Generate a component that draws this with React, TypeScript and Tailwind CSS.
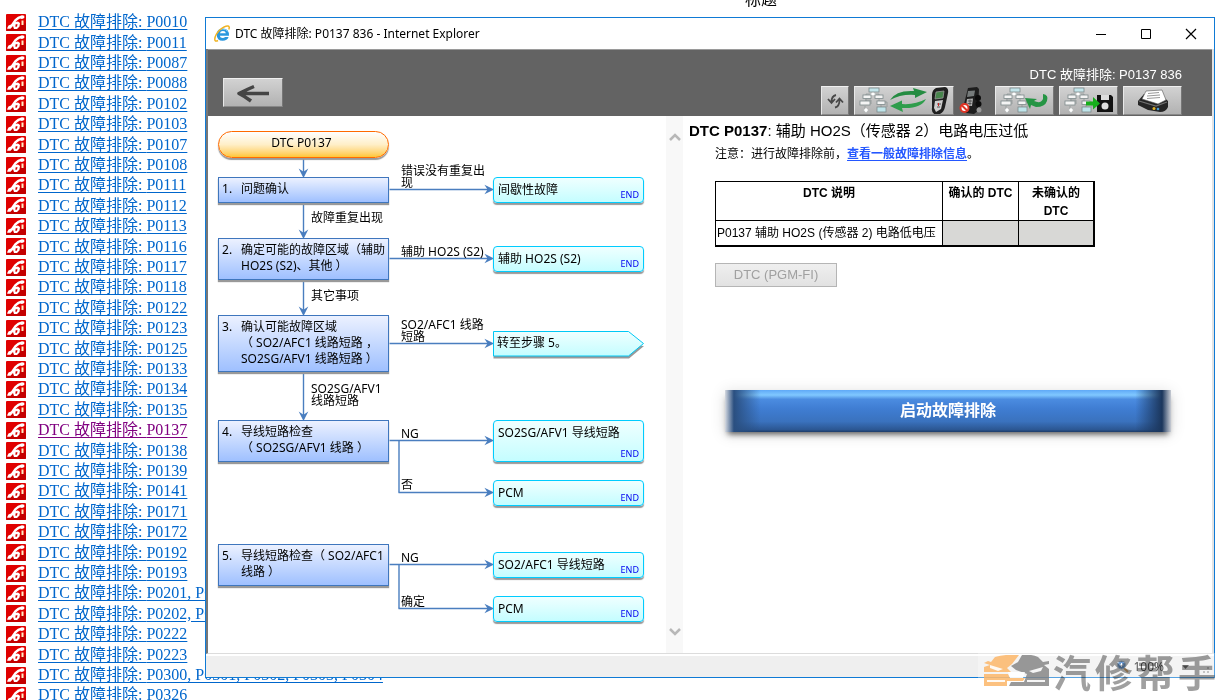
import React from 'react';

interface FlowNode {
  text: string[];
  box: string;
}

interface StepNode extends FlowNode {
  num: number;
}

const codes = [
  'P0010', 'P0011', 'P0087', 'P0088', 'P0102', 'P0103', 'P0107', 'P0108', 'P0111',
  'P0112', 'P0113', 'P0116', 'P0117', 'P0118', 'P0122', 'P0123', 'P0125', 'P0133',
  'P0134', 'P0135', 'P0137', 'P0138', 'P0139', 'P0141', 'P0171', 'P0172', 'P0192',
  'P0193', 'P0201, P0202', 'P0202, P0203', 'P0222', 'P0223',
  'P0300, P0301, P0302, P0303, P0304', 'P0326',
];

const visited = 'P0137';

const steps: StepNode[] = [
  { num: 1, text: ['问题确认'], box: 'top-[61px] h-[26px]' },
  { num: 2, text: ['确定可能的故障区域（辅助', 'HO2S (S2)、其他 ）'], box: 'top-[122px] h-[42px]' },
  { num: 3, text: ['确认可能故障区域', '（ SO2/AFC1 线路短路 ，', 'SO2SG/AFV1 线路短路 ）'], box: 'top-[199px] h-[57px]' },
  { num: 4, text: ['导线短路检查', '（ SO2SG/AFV1 线路 ）'], box: 'top-[304px] h-[42px]' },
  { num: 5, text: ['导线短路检查（ SO2/AFC1', '线路 ）'], box: 'top-[428px] h-[42px]' },
];

const ends: FlowNode[] = [
  { text: ['间歇性故障'], box: 'top-[61px] h-[26px]' },
  { text: ['辅助 HO2S (S2)'], box: 'top-[130px] h-[26px]' },
  { text: ['SO2SG/AFV1 导线短路'], box: 'top-[304px] h-[42px]' },
  { text: ['PCM'], box: 'top-[364px] h-[26px]' },
  { text: ['SO2/AFC1 导线短路'], box: 'top-[436px] h-[26px]' },
  { text: ['PCM'], box: 'top-[480px] h-[26px]' },
];

const labels: FlowNode[] = [
  { text: ['错误没有重复出', '现'], box: 'left-[193px] top-[49px]' },
  { text: ['故障重复出现'], box: 'left-[103px] top-[96px]' },
  { text: ['辅助 HO2S (S2)'], box: 'left-[193px] top-[130px]' },
  { text: ['其它事项'], box: 'left-[103px] top-[174px]' },
  { text: ['SO2/AFC1 线路', '短路'], box: 'left-[193px] top-[203px]' },
  { text: ['SO2SG/AFV1', '线路短路'], box: 'left-[103px] top-[267px]' },
  { text: ['NG'], box: 'left-[193px] top-[312px]' },
  { text: ['否'], box: 'left-[193px] top-[363px]' },
  { text: ['NG'], box: 'left-[193px] top-[436px]' },
  { text: ['确定'], box: 'left-[193px] top-[480px]' },
];

// [x, from, to]
const downLines = [[95, 42, 60], [95, 87, 121], [95, 164, 198], [95, 256, 303]];
// [y, from]
const rightLines = [[73, 181], [142, 181], [227, 181], [324, 181], [376, 190], [448, 181], [492, 190]];

const PhoneIcon = () => (
  <svg width="20" height="17" viewBox="0 0 20 17" className="shrink-0" aria-hidden="true">
    <rect width="20" height="17" rx="1" fill="#e00000" />
    <path d="M0 16 20 9v7q0 1-1 1H1Q0 17 0 16Z" fill="#c40000" />
    <path d="M1 14.500 2.500 11.500 5 10.500 8.500 5.500Q11.500 2 16 1.300L18.300 1.800V4L16 5 14 4.500Q11.500 5.500 9.500 8L12 7.500 14 9 13.500 12.500 11 15H8L7 12 4.500 14.800H2Z" fill="#fff" />
    <path d="M9.500 10.500 11.500 10 11 12.500 9.500 13Z" fill="#d90000" />
    <path d="M16.500 6.500V11" stroke="#ffedc4" strokeWidth="2" />
  </svg>
);

const IeIcon = () => (
  <svg width="16" height="17" viewBox="0 0 16 17" aria-hidden="true">
    <path d="M15 10.700H5.800Q6.200 13 8.700 13 10.300 13 11 12H14.600Q13.200 15.800 8.700 15.800 2.800 15.800 2.700 9.700 2.800 3.600 8.800 3.500 15.200 3.600 15 10.700ZM11.900 8.300Q11.500 6.100 8.900 6.100 6.400 6.100 5.900 8.300Z" fill="#2b97de" />
    <path d="M4.500 6Q6 4 8.800 4 12 4 13.500 6.200" fill="none" stroke="#8ad6f8" strokeWidth="1" />
    <path d="M4 15.500Q.6 17.200.8 14 1.200 9.500 6 4.800 11 .5 14 1 16 1.500 14.800 4.500" fill="none" stroke="#f0b323" strokeWidth="1.500" />
  </svg>
);

const MiniFlow = () => (
  <g>
    <path d="M18 5v3M11 8V7h13v1M11 11v4M24 11v3M10 19v3M26 17v3M10 13h6v4M29 15h3v5" fill="none" stroke="#8f9797" strokeWidth=".8" />
    <g stroke="#7d898b" strokeWidth=".8">
      <rect x="14" y="1" width="10" height="4" fill="#c2e4ea" />
      <rect x="8" y="8" width="8" height="3.500" fill="#f4f4f4" />
      <rect x="20" y="8" width="8" height="3.500" fill="#f4f4f4" />
      <rect x="5" y="14" width="10" height="4" fill="#f4f4f4" />
      <rect x="22" y="14" width="8" height="3.500" fill="#f4f4f4" />
      <rect x="22" y="20" width="9" height="5" fill="#bfe4ea" />
    </g>
    <path d="m18 5 3 2-3 2-3-2ZM11 20.500l2.500 2.500L11 26l-2.500-3Z" fill="#fff" stroke="#a5adad" strokeWidth=".5" />
  </g>
);

const ScanTool = () => (
  <g>
    <path d="M8 1 17 0Q21 1 20 6L17 20Q16 25 12 27L8 28Q3 26 4 21L4 8Q4 3 8 1Z" fill="#202020" />
    <path d="M8 5 16 4 15 11 7 12Z" fill="#47854c" stroke="#9a9a9a" strokeWidth=".8" />
    <path d="M7 14 15 13 13 22 8 25 6 21Z" fill="#cfcfcf" />
    <path d="M9 17h4M9 20h3" stroke="#555" strokeWidth="1" />
    <path d="M10.500 16v3" stroke="#c22" strokeWidth="1" />
  </g>
);

interface ToolButtonProps {
  label: string;
  width: string;
  viewBox: string;
  children: React.ReactNode;
}

const ToolButton: React.FC<ToolButtonProps> = ({ label, width, viewBox, children }) => (
  <button
    type="button"
    aria-label={label}
    className={`${width} h-[29px] shrink-0 border border-t-[#f0f0f0] border-l-[#e8e8e8] border-r-[#777] border-b-[#888] bg-linear-to-b from-[#d2d2d2] to-[#b2b2b2]`}
  >
    <svg viewBox={viewBox} className="block h-full w-full" aria-hidden="true">{children}</svg>
  </button>
);

const Toolbar = () => (
  <div className="flex h-[67px] shrink-0 items-end justify-between border-t border-[#9a9a9a] bg-[#636363] pl-[15px] pr-[30px]">
    <div className="pb-1">
      <ToolButton label="返回" width="w-[60px]" viewBox="0 0 58 27">
        <path d="M45 14.500H16M30 7.500Q25 9.500 15 14.500 21 17.500 27 22" fill="none" stroke="#454545" strokeWidth="3.500" strokeLinejoin="round" />
      </ToolButton>
    </div>
    <div className="flex flex-col items-end gap-[3px]">
      <span className="font-['Liberation_Sans','Noto_Sans_CJK_SC',sans-serif] text-[13px] leading-4 text-white">DTC 故障排除: P0137 836</span>
      <div className="flex gap-[5px] pb-px">
        <ToolButton label="刷新" width="w-7" viewBox="0 0 26 27">
          <path d="M14 8Q9.500 9 9.500 15M6 12 9.500 16 13 12M13 20.500Q17.500 19.500 17.500 13M14 15.500 17.500 11.500 21 15.500" fill="none" stroke="#484848" strokeWidth="1.800" />
        </ToolButton>
        <ToolButton label="同步" width="w-[100px]" viewBox="0 0 98 27">
          <MiniFlow />
          <path d="M35 13Q41 3 59 4L58 1 72 5 60 11 60 8Q46 7 35 13Z" fill="#258c42" />
          <path d="M71 12Q66 22 47 21L48 25 35 19 47 13.500 47 17Q60 18 71 12Z" fill="#2f9d4c" />
          <g transform="translate(73 0)"><ScanTool /></g>
        </ToolButton>
        <svg width="27" height="29" viewBox="0 0 27 29" className="mr-1" role="img" aria-label="未连接">
          <path d="M9 2 18 1 20 3 19 25 15 28 7 27 4 22Z" fill="#1d1d1d" />
          <path d="M9 5 16 4.500 15 10 8 11Z" fill="#767b7b" />
          <path d="M8 13 14 12.500 13 20 7 20Z" fill="#b0b0b0" />
          <path d="M9 15h4M8.500 17.500h4M11 13.500v6" stroke="#444" strokeWidth=".8" />
          <g fill="#0c0c0c"><circle cx="19" cy="12" r="3" /><circle cx="19.500" cy="18" r="3" /></g>
          <circle cx="20" cy="24" r="2.500" fill="#999" />
          <circle cx="5.500" cy="22" r="4" fill="#fff" stroke="#de3425" strokeWidth="2" />
          <path d="m2.500 19 6 6" stroke="#de3425" strokeWidth="2" />
        </svg>
        <ToolButton label="流程返回" width="w-[59px]" viewBox="0 0 57 27">
          <MiniFlow />
          <path d="M47 7Q53 8 51 14 49 20 40 20L35 18 34 22 29 11 41 12 38 14Q45 17 47 12Z" fill="#259544" />
        </ToolButton>
        <ToolButton label="保存" width="w-[59px]" viewBox="0 0 57 27">
          <MiniFlow />
          <path d="M37 8h14l2 2v15H37Z" fill="#111" />
          <path d="M41 8h8v5h-8Z" fill="#ddd" />
          <circle cx="45" cy="19" r="3.500" fill="#ddd" />
          <path d="M26 14.500h7V10l7 6.500-7 6v-4h-7Z" fill="#16ae1b" />
        </ToolButton>
        <ToolButton label="打印" width="w-[59px]" viewBox="0 0 57 27">
          <path d="M14 14 20 7 38 9 44 14V20Q42 25 36 25L24 23 14 18Z" fill="#252525" />
          <path d="M22 4 38 3 42 13 34 17 18 12Z" fill="#fff" stroke="#555" strokeWidth=".6" />
          <path d="M24 6.500 35 5.500M23 9 36 8M23 11.500 36 10.500" stroke="#999" strokeWidth="1" />
          <path d="M15 14 32 19 43 15" fill="none" stroke="#717171" strokeWidth="1.200" />
          <circle cx="30" cy="21.500" r="1.500" fill="#e0b42b" />
          <circle cx="34" cy="22" r="1.300" fill="#4b9cd1" />
        </ToolButton>
      </div>
    </div>
  </div>
);

const FlowChart = () => (
  <div className="relative w-[458px] shrink-0 overflow-hidden text-xs">
    <svg className="absolute left-0 top-0 h-full w-full" aria-hidden="true">
      <g stroke="#4a7ebf" strokeWidth="1.400" fill="none" transform="translate(.5 .5)">
        {downLines.map(([x, from, to]) => (
          <g key={from}>
            <path d={`M${x} ${from}V${to - 3}`} />
            <path d={`M${x - 3} ${to - 6} ${x} ${to - 4} ${x + 3} ${to - 6} ${x} ${to}Z`} fill="#4a7ebf" />
          </g>
        ))}
        {rightLines.map(([y, from]) => (
          <g key={y}>
            <path d={`M${from} ${y}H281`} />
            <path d={`M278 ${y - 3} 280 ${y} 278 ${y + 3} 284 ${y}Z`} fill="#4a7ebf" />
          </g>
        ))}
        <path d="M190.500 324V376M190.500 448V492" />
      </g>
    </svg>

    <div className="absolute left-[10px] top-[15px] h-[27px] w-[171px] rounded-full border border-[#ff6a00] bg-linear-to-b from-white via-[#ffefc8] to-[#ffc62e] pr-1 text-center leading-[22px] shadow-[0_2px_1px_#999]">
      DTC P0137
    </div>

    {steps.map(step => (
      <div
        key={step.num}
        className={`absolute left-[10px] flex w-[171px] border border-[#3f76bd] bg-linear-to-b from-[#ecf1ff] to-[#9fc0ff] pl-[3px] pt-[3px] leading-4 shadow-[0_2px_1px_#999] ${step.box}`}
      >
        <span className="w-[19px] shrink-0">{step.num}.</span>
        <span className="whitespace-nowrap">
          {step.text.map(line => <span key={line} className="block">{line}</span>)}
        </span>
      </div>
    ))}

    {ends.map(node => (
      <div
        key={node.box}
        className={`absolute left-[285px] w-[151px] rounded-[4px] border border-[#00ccff] bg-linear-to-b from-[#efffff] to-[#c4fdff] pl-1 pt-1 leading-4 shadow-[0_2px_1px_#999] ${node.box}`}
      >
        {node.text[0]}
        <span className="absolute bottom-0 right-1 text-[9px] leading-[15px] text-[#0000f0]">END</span>
      </div>
    ))}

    <div className="absolute left-[285px] top-[215px] h-[29px] w-[152px]">
      <svg width="152" height="29" viewBox="0 0 152 29" className="absolute" aria-hidden="true">
        <defs>
          <linearGradient id="goto" x1="0" y1="0" x2="0" y2="1">
            <stop offset="0" stopColor="#efffff" />
            <stop offset="1" stopColor="#c4fdff" />
          </linearGradient>
        </defs>
        <path d="M.5 2.500V27.500H136L151 15Z" fill="#999" />
        <path d="M.5.5H135.500L150.500 12.500 135.500 25H.5Z" fill="url(#goto)" stroke="#00c8f5" />
      </svg>
      <span className="relative block pl-1 pt-1 leading-4">转至步骤 5。</span>
    </div>

    {labels.map(label => (
      <div key={label.box} className={`absolute whitespace-nowrap leading-3 ${label.box}`}>
        {label.text.map(line => <span key={line} className="block">{line}</span>)}
      </div>
    ))}
  </div>
);

const ScrollBar = () => (
  <div className="flex w-[17px] shrink-0 flex-col items-center justify-between bg-[#f8f8f8] pb-[17px] pt-[17px]">
    <svg width="12" height="8" viewBox="0 0 12 8" aria-hidden="true">
      <path d="M1 7 6 2l5 5" fill="none" stroke="#b8b8b8" strokeWidth="2.500" />
    </svg>
    <svg width="12" height="8" viewBox="0 0 12 8" aria-hidden="true">
      <path d="M1 1 6 6l5-5" fill="none" stroke="#b8b8b8" strokeWidth="2.500" />
    </svg>
  </div>
);

const Details = () => (
  <section className="min-w-0 grow pl-[6px] pt-[5px] font-['Liberation_Sans','Noto_Sans_CJK_SC',sans-serif] text-xs">
    <h1 className="text-[15px] leading-5"><b>DTC P0137</b>: 辅助 HO2S（传感器 2）电路电压过低</h1>
    <div className="pl-[26px]">
      <p className="pt-1 leading-[18px]">
        注意：进行故障排除前，<a href="#general" className="font-bold text-[#2457ff] underline underline-offset-2">查看一般故障排除信息</a>。
      </p>
      <table className="mt-[18px] w-[380px] table-fixed border-collapse border border-b-2 border-r-2 border-black leading-[18px]">
        <thead>
          <tr className="h-[39px] align-top">
            <th className="w-[227px] border border-black pt-[2px]">DTC 说明</th>
            <th className="w-[76px] border border-black pt-[2px]">确认的 DTC</th>
            <th className="border border-black px-3 pt-[2px]">未确认的 DTC</th>
          </tr>
        </thead>
        <tbody>
          <tr className="h-[25px]">
            <td className="whitespace-nowrap border border-black pl-px">P0137 辅助 HO2S (传感器 2) 电路低电压</td>
            <td className="border border-black bg-[#d8d8d6]" />
            <td className="border border-black bg-[#d8d8d6]" />
          </tr>
        </tbody>
      </table>
      <button
        type="button"
        disabled
        className="mt-4 block h-6 w-[122px] border border-[#b5b5b5] bg-linear-to-b from-[#efefef] to-[#e2e2e2] text-[13px] leading-5 text-[#a0a0a0]"
      >
        DTC (PGM-FI)
      </button>
    </div>
    <div className="mt-[103px] pl-9 pr-[41px]">
      <button
        type="button"
        className="flex h-[42px] w-full items-center justify-center bg-[linear-gradient(90deg,#d5d9e0,#2a4f80_2%,transparent_8%,transparent_92%,#1b365c_98%,#c8ccd4),linear-gradient(180deg,#5fa9f7,#80c8ff_12%,#4b8ce0_22%,#3f7dd2_45%,#3a72be_75%,#2c5793_94%,#1d3c69)] text-base font-bold text-white shadow-[0_5px_6px_-3px_#555,0_2px_16px_#ddd]"
      >
        启动故障排除
      </button>
    </div>
  </section>
);

const BrowserWindow = () => (
  <main className="absolute bottom-[22px] left-[205px] right-[3px] top-[17px] flex flex-col border border-[#0f7ad5] bg-white font-['Noto_Sans','Noto_Sans_CJK_SC',sans-serif] text-black">
    <header className="flex h-[31px] shrink-0 items-center justify-between pl-2 pr-[17px]">
      <div className="flex items-center gap-[5px] text-xs leading-4">
        <IeIcon />
        <span>DTC 故障排除: P0137 836 - Internet Explorer</span>
      </div>
      <div className="flex items-center gap-[33px]">
        <button type="button" aria-label="最小化">
          <svg width="12" height="12" viewBox="0 0 12 12"><path d="M1 6.500h10" stroke="#000" /></svg>
        </button>
        <button type="button" aria-label="最大化">
          <svg width="12" height="12" viewBox="0 0 12 12"><path d="M1.500 1.500h9v9h-9Z" fill="none" stroke="#000" /></svg>
        </button>
        <button type="button" aria-label="关闭">
          <svg width="12" height="12" viewBox="0 0 12 12"><path d="m1 1 10 10M11 1 1 11" stroke="#000" strokeWidth="1.200" /></svg>
        </button>
      </div>
    </header>
    <div className="flex min-h-0 grow flex-col border-b border-l-2 border-r-2 border-b-[#dcdcdc] border-l-[#777] border-r-[#e3e3e3]">
      <Toolbar />
      <div className="flex min-h-0 grow">
        <FlowChart />
        <ScrollBar />
        <Details />
      </div>
    </div>
    <footer className="mt-[2px] flex h-[21px] shrink-0 items-center justify-end gap-1 bg-[#efefef] pr-1 text-xs leading-4">
      <svg width="13" height="13" viewBox="0 0 13 13" aria-hidden="true">
        <path d="m8 8 4 4" stroke="#c98a3c" strokeWidth="2" />
        <circle cx="5.500" cy="5" r="4" fill="#2c6fbd" stroke="#93b4d6" />
        <path d="M5.500 3v4M3.500 5h4" stroke="#fff" />
      </svg>
      <span className="pr-3">100%</span>
      <svg width="30" height="14" viewBox="0 0 30 14" aria-hidden="true">
        <path d="M2 5h7L5.500 9Z" fill="#333" />
        <path d="M27 8h2M23 12h2M27 12h2" stroke="#aaa" strokeWidth="2" />
      </svg>
    </footer>
  </main>
);

const Watermark = () => (
  <div className="pointer-events-none absolute bottom-3 right-0 flex h-[35px] w-60 items-center gap-[2px] bg-white/30 pl-[5px]">
    <svg width="68" height="31" viewBox="0 0 68 31" className="shrink-0" aria-hidden="true">
      <path d="M1 8 5 6 8 7 12 2Q22-1 36 0L29 9 24 13 28 17H1V12L7 10ZM1 19H25L27 23H42L40 26H24V31H1Z" fill="#fbb668" opacity=".85" />
      <path d="M39 0Q49-1 55 2L60 7 66 6V9L61 10 66 14V31H26L28 27H41L44 19 33 15 28 11 35 7Z" fill="#808080" opacity=".8" />
      <path d="m7 10 13 4-5 2-8-3ZM46 16l14-4-2 4-8 2ZM25 17h17l-2 6H27ZM4 25h18v2H4ZM44 25h18v2H44Z" fill="#fff" opacity=".9" />
    </svg>
    <div className="flex grow justify-between pr-[2px] font-['Noto_Sans_CJK_SC',sans-serif] text-[38px] font-bold leading-[35px] text-[#a0a0a0] mix-blend-multiply">
      <span>汽</span>
      <span>修</span>
      <span>帮</span>
      <span>手</span>
    </div>
  </div>
);

export default function App() {
  return (
    <div className="relative h-screen overflow-hidden bg-white font-['Liberation_Serif','Noto_Sans_CJK_SC',serif] text-base">
      <div className="flex h-3 items-end overflow-hidden pb-[3px] pl-[745px] leading-[18px]">标题</div>
      <ul className="pl-[6px]">
        {codes.map(code => (
          <li key={code} className="flex h-5 items-center gap-3 nth-[5n]:h-[21px] nth-[5n+2]:h-[21px]">
            <PhoneIcon />
            <a
              href={`#${code}`}
              className={`whitespace-nowrap leading-5 underline underline-offset-2 ${code === visited ? 'text-[#800080]' : 'text-[#0066cc]'}`}
            >
              DTC 故障排除: {code}
            </a>
          </li>
        ))}
      </ul>
      <BrowserWindow />
      <Watermark />
    </div>
  );
}
